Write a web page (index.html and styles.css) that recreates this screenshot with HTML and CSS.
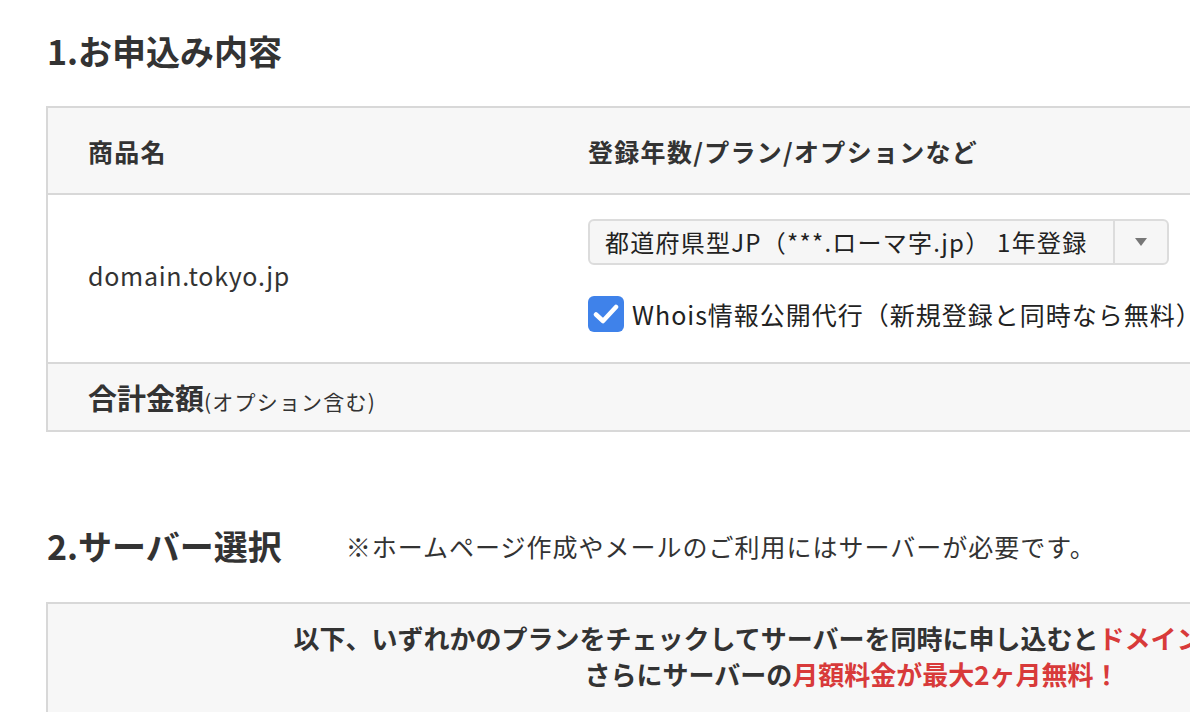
FILE: index.html
```html
<!DOCTYPE html>
<html lang="ja">
<head>
<meta charset="utf-8">
<title>お申込み内容</title>
<link rel="stylesheet" href="styles.css">
</head>
<body>
<div class="page">
  <section class="section">
    <h2 class="heading">1.お申込み内容</h2>
    <div class="order">
      <div class="row head">
        <div class="cell c1">商品名</div>
        <div class="cell c2">登録年数/プラン/オプションなど</div>
      </div>
      <div class="row body">
        <div class="cell c1 domain">domain.tokyo.jp</div>
        <div class="cell c2 opts">
          <div class="select">
            <span class="select-text">都道府県型JP（***.ローマ字.jp） 1年登録</span>
            <span class="select-btn"><svg width="12" height="8" viewBox="0 0 12 8"><path d="M0 0H12L6 8Z" fill="#777"/></svg></span>
          </div>
          <label class="check">
            <span class="box"><svg width="26" height="22" viewBox="0 0 26 22"><path d="M3 11.5L10 18L23 4" fill="none" stroke="#fff" stroke-width="4.5" stroke-linecap="round" stroke-linejoin="round"/></svg></span>
            <span class="check-label">Whois情報公開代行（新規登録と同時なら無料）</span>
          </label>
        </div>
      </div>
      <div class="row foot">
        <div class="cell c1"><strong class="total">合計金額</strong><span class="small">(オプション含む)</span></div>
      </div>
    </div>
  </section>

  <section class="section second">
    <div class="heading-row">
      <h2 class="heading">2.サーバー選択</h2>
      <p class="note">※ホームページ作成やメールのご利用にはサーバーが必要です。</p>
    </div>
    <div class="promo">
      <p class="promo-line">以下、いずれかのプランをチェックしてサーバーを同時に申し込むと<span class="red">ドメイン登録料金が無料！</span></p>
      <p class="promo-line">さらにサーバーの<span class="red">月額料金が最大2ヶ月無料！</span></p>
    </div>
  </section>
</div>
</body>
</html>
```

FILE: styles.css
```css
html, body {
  margin: 0;
  padding: 0;
  overflow: hidden;
  background: #fff;
}
body {
  font-family: "Noto Sans CJK JP", "Noto Sans", sans-serif;
  color: #333;
}
.page {
  width: 1612px;
  padding: 31px 0 0 46px;
}
.heading {
  margin: 0;
  font-size: 34px;
  line-height: 40px;
  font-weight: 700;
  color: #333;
  padding-left: 1px;
  white-space: nowrap;
}
.order {
  margin-top: 35px;
  border: 2px solid #d8d8d8;
}
.row {
  display: flex;
}
.cell {
  box-sizing: border-box;
}
.c1 {
  width: 540px;
  padding-left: 40px;
  white-space: nowrap;
}
.c2 {
  white-space: nowrap;
}
.head {
  background: #f7f7f7;
  height: 85px;
  align-items: center;
  border-bottom: 2px solid #d8d8d8;
  font-size: 25px;
  letter-spacing: 1.3px;
  font-weight: 700;
  color: #333;
}
.body {
  align-items: center;
  border-bottom: 2px solid #d8d8d8;
}
.domain {
  font-size: 25px;
  letter-spacing: 0.7px;
  color: #333;
  padding-bottom: 8px;
}
.opts {
  padding: 24px 0 30px;
}
.select {
  width: 581px;
  height: 46px;
  box-sizing: border-box;
  border: 2px solid #dcdcdc;
  border-radius: 6px;
  background: #f6f6f6;
  display: flex;
  align-items: center;
}
.select-text {
  flex: 1;
  padding-left: 15px;
  font-size: 24px;
  letter-spacing: 1.25px;
  color: #222;
  line-height: 42px;
}
.select-btn {
  width: 52px;
  height: 42px;
  border-left: 2px solid #dcdcdc;
  display: flex;
  align-items: center;
  justify-content: center;
}
.check {
  display: flex;
  align-items: center;
  margin-top: 31px;
}
.box {
  width: 36px;
  height: 36px;
  border-radius: 6px;
  background: #3f82ea;
  display: flex;
  align-items: center;
  justify-content: center;
  flex: none;
}
.check-label {
  margin-left: 8px;
  font-size: 25px;
  letter-spacing: 1px;
  color: #222;
  white-space: nowrap;
}
.foot {
  background: #f7f7f7;
  height: 66px;
  align-items: center;
}
.total {
  font-size: 29px;
  font-weight: 700;
  color: #333;
}
.small {
  font-size: 21px;
  letter-spacing: 1.2px;
  color: #333;
}
.second {
  margin-top: 94px;
}
.heading-row {
  display: flex;
  align-items: center;
}
.note {
  margin: 0 0 0 64px;
  font-size: 25px;
  letter-spacing: 1px;
  color: #333;
  white-space: nowrap;
}
.promo {
  margin-top: 36px;
  border: 2px solid #d8d8d8;
  border-bottom: none;
  background: #f7f7f7;
  padding-top: 16px;
  height: 200px;
}
.promo-line {
  margin: 0;
  text-align: center;
  font-size: 26px;
  line-height: 36px;
  font-weight: 700;
  color: #333;
  white-space: nowrap;
}
.red {
  color: #d83a3a;
}
```
